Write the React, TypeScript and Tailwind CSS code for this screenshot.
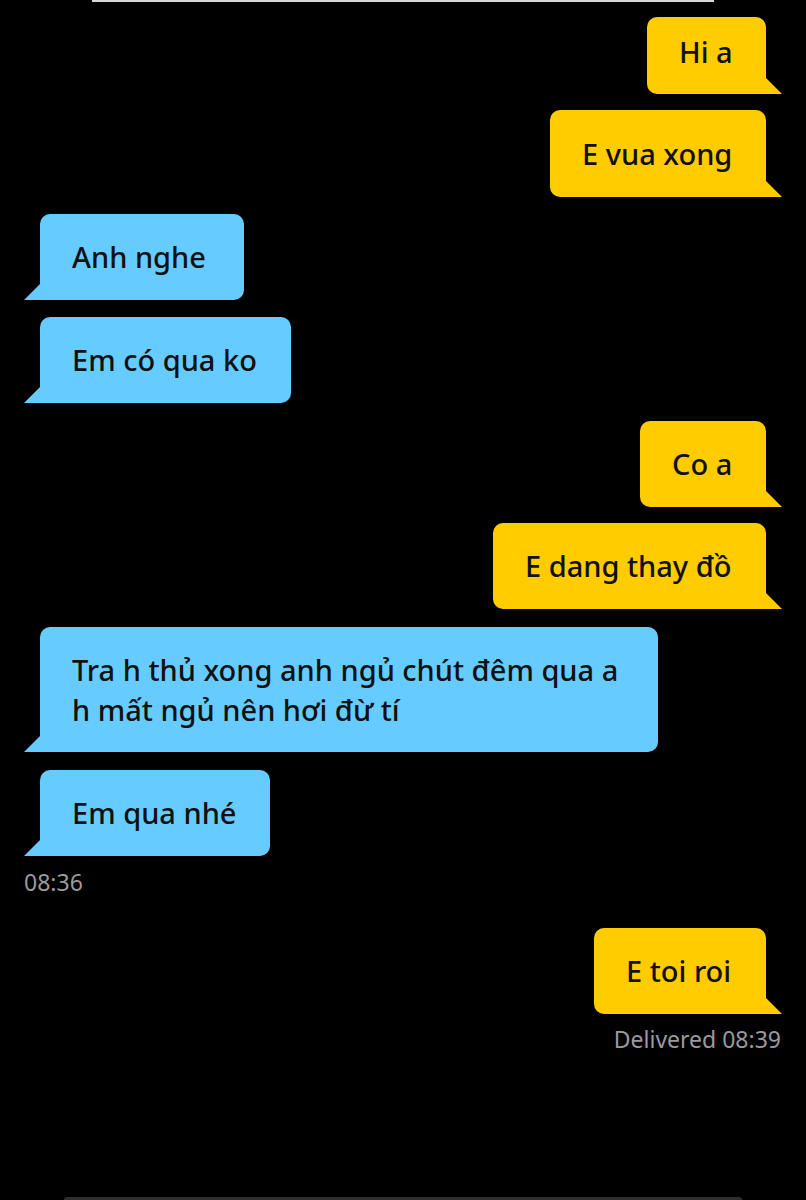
import React from 'react';

type Msg = {
  side: 'in' | 'out';
  lines: string[];
  w: number;
  h: number;
  mt: number;
  pb?: number;
};

const messages: Msg[] = [
  { side: 'out', lines: ['Hi a'], w: 119, h: 77, mt: 15, pb: 8 },
  { side: 'out', lines: ['E vua xong'], w: 216, h: 87, mt: 16 },
  { side: 'in', lines: ['Anh nghe'], w: 204, h: 86, mt: 17 },
  { side: 'in', lines: ['Em có qua ko'], w: 251, h: 86, mt: 17 },
  { side: 'out', lines: ['Co a'], w: 126, h: 86, mt: 18 },
  { side: 'out', lines: ['E dang thay đồ'], w: 273, h: 86, mt: 16 },
  { side: 'in', lines: ['Tra h thủ xong anh ngủ chút đêm qua a', 'h mất ngủ nên hơi đừ tí'], w: 618, h: 125, mt: 18 },
  { side: 'in', lines: ['Em qua nhé'], w: 230, h: 86, mt: 18 },
];

const Tail = ({ side }: { side: 'in' | 'out' }) => (
  <svg width="16" height="16" viewBox="0 0 16 16" className="shrink-0 block">
    {side === 'out' ? (
      <polygon points="0,0 16,16 0,16" fill="#ffcc00" />
    ) : (
      <polygon points="16,0 0,16 16,16" fill="#66ccff" />
    )}
  </svg>
);

const Bubble = ({ m }: { m: Msg }) => {
  const out = m.side === 'out';
  return (
    <div
      className={`flex items-end ${out ? 'justify-end' : 'justify-start'}`}
      style={{ marginTop: m.mt }}
    >
      {!out && <Tail side="in" />}
      <div
        className={`flex flex-col justify-center pl-[32px] text-[29px] leading-[40px] font-medium text-[#111] whitespace-nowrap ${
          out ? 'bg-[#ffcc00] rounded-[10px] rounded-br-none' : 'bg-[#66ccff] rounded-[10px] rounded-bl-none'
        }`}
        style={{ width: m.w, height: m.h, paddingBottom: m.pb ?? 0 }}
      >
        {m.lines.map((l) => (
          <div key={l}>{l}</div>
        ))}
      </div>
      {out && <Tail side="out" />}
    </div>
  );
};

const App: React.FC = () => {
  return (
    <div
      className="relative w-[806px] h-[1200px] bg-black overflow-hidden flex flex-col"
      style={{ fontFamily: '"Noto Sans", Roboto, sans-serif' }}
    >
      <div className="mx-[92px] h-[2px] bg-[#d8d8d8] shrink-0" />

      <div className="flex flex-col px-[24px]">
        {messages.map((m, i) => (
          <Bubble key={i} m={m} />
        ))}

        <div className="mt-[14px] text-[23px] leading-[24px] text-[#9a9a9e]">08:36</div>

        <Bubble m={{ side: 'out', lines: ['E toi roi'], w: 172, h: 86, mt: 34 }} />

        <div className="mt-[13px] text-[23px] leading-[24px] text-[#9a9a9e] text-right pr-[1px]">
          Delivered 08:39
        </div>
      </div>

      <div className="mt-auto mx-[64px] h-[3px] rounded-t-full bg-[#2e2e2e] shrink-0" />
    </div>
  );
};

export default App;
